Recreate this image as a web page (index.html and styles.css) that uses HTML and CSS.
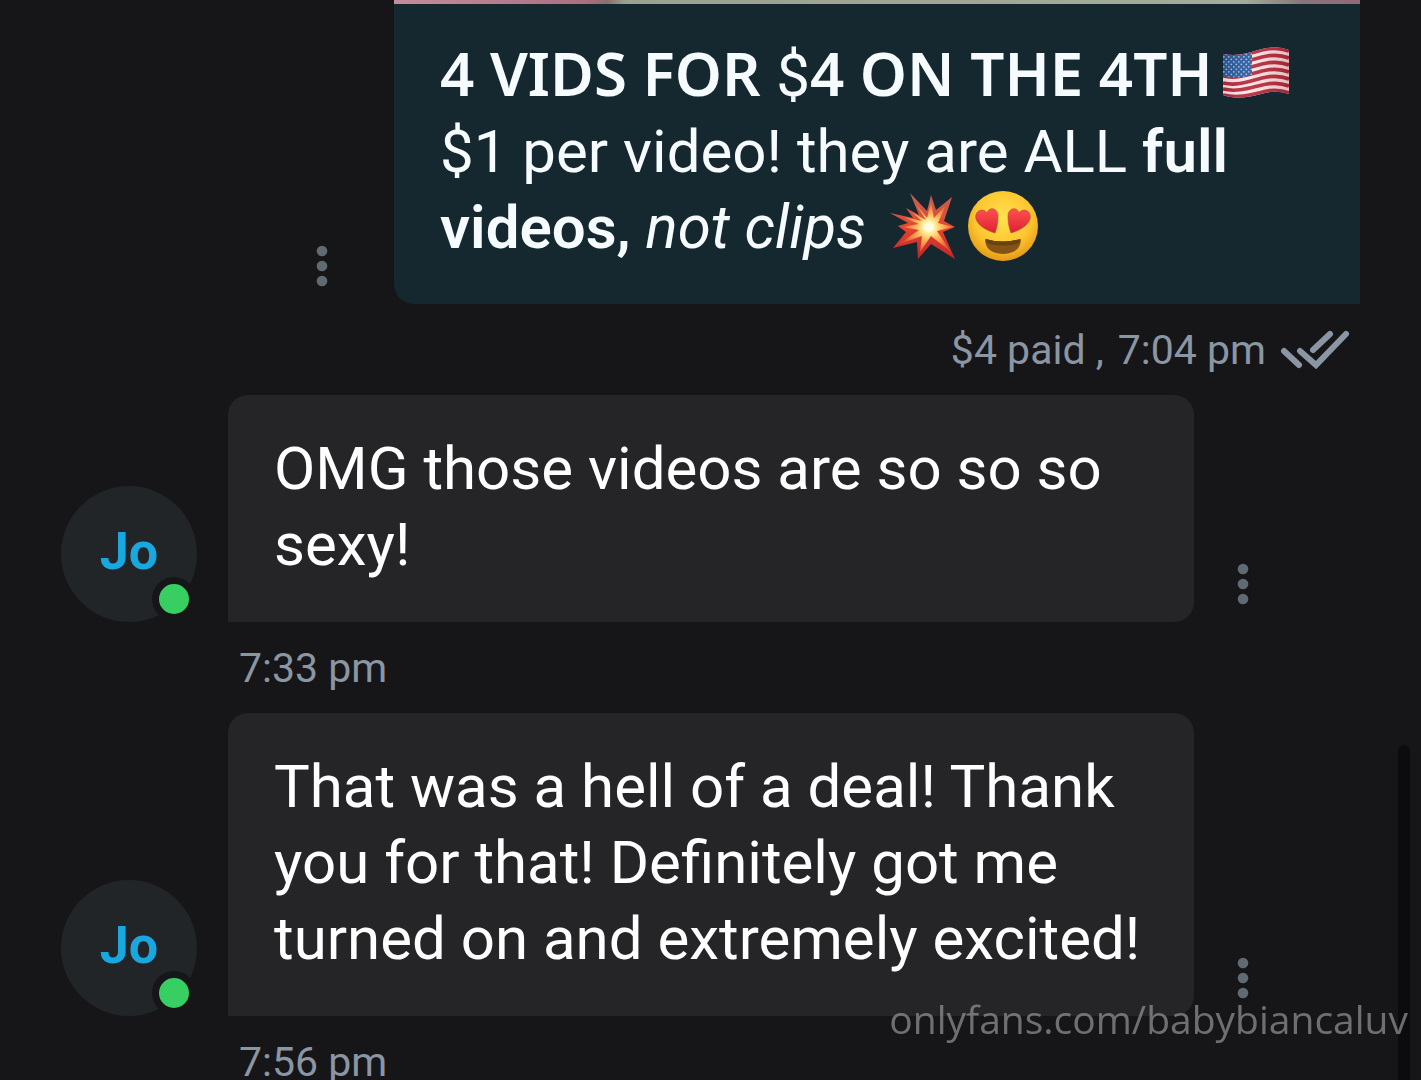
FILE: index.html
```html
<!DOCTYPE html>
<html lang="en">
<head>
    <meta charset="UTF-8">
    <meta name="viewport" content="width=device-width, initial-scale=1.0">
    <title>Messages</title>
    <link rel="stylesheet" href="styles.css">
</head>
<body>
    <main class="chat">
        <div class="message outgoing">
            <button class="menu" type="button" aria-label="Message options">
                <svg width="12" height="42" viewBox="0 0 12 42"><circle cx="6" cy="6" r="5.3"/><circle cx="6" cy="21" r="5.3"/><circle cx="6" cy="36" r="5.3"/></svg>
            </button>
            <div class="bubble">
                <div class="media"></div>
                <p class="text">
                    <strong class="headline">4 VIDS FOR <span class="currency">$</span>4 ON THE 4TH</strong><svg class="emoji" role="img" aria-label="US flag" viewBox="0 0 72 72">
                        <defs>
                            <clipPath id="flagShape"><path d="M3 16C20 20 34 12 47 10Q59 8 69 12V56Q57 52 45 55C30 59 17 62 3 57Z"/></clipPath>
                            <pattern id="stars" width="5" height="5" patternUnits="userSpaceOnUse"><rect width="5" height="5" fill="#28589c"/><circle cx="1.3" cy="1.3" r=".9" fill="#a0c0e4"/><circle cx="3.8" cy="3.8" r=".9" fill="#a0c0e4"/></pattern>
                            <linearGradient id="flagShade"><stop offset="0" stop-color="#000" stop-opacity=".12"/><stop offset=".35" stop-color="#fff" stop-opacity=".08"/><stop offset="1" stop-color="#400" stop-opacity=".2"/></linearGradient>
                        </defs>
                        <g clip-path="url(#flagShape)">
                            <rect width="72" height="72" fill="#ffe3e5"/>
                            <g fill="none" stroke="#b4283a" stroke-width="3.6">
                                <path d="M3 17C20 21 34 13 47 11Q59 9 69 13"/>
                                <path d="M3 24C20 28 34 20 47 18Q59 16 69 20"/>
                                <path d="M3 31C20 35 34 27 47 25Q59 23 69 27"/>
                                <path d="M3 38C20 42 34 34 47 32Q59 30 69 34"/>
                                <path d="M3 45C20 49 34 41 47 39Q59 37 69 41"/>
                                <path d="M3 51C20 55 34 48 47 46Q59 44 69 48"/>
                                <path d="M3 57C20 61 34 56 47 53Q59 51 69 55"/>
                            </g>
                            <path d="M3 14Q18 20 32 14V37Q18 42 3 38Z" fill="url(#stars)"/>
                            <rect width="72" height="72" fill="url(#flagShade)"/>
                        </g>
                    </svg><br>
                    $1 per video! they are ALL <strong>full videos,</strong> <em>not clips</em>
                    <svg class="emoji" role="img" aria-label="Collision" viewBox="0 0 72 72">
                        <defs>
                            <linearGradient id="blast" x1="0" y1="0" x2="0" y2="1"><stop offset="0" stop-color="#bd6356"/><stop offset=".5" stop-color="#e34632"/><stop offset="1" stop-color="#c22626"/></linearGradient>
                            <radialGradient id="spark" gradientUnits="userSpaceOnUse" cx="41" cy="37" r="28"><stop offset="0" stop-color="#fff"/><stop offset=".22" stop-color="#fff09b"/><stop offset=".5" stop-color="#ffb052"/><stop offset="1" stop-color="#e04b32"/></radialGradient>
                        </defs>
                        <path fill="url(#blast)" d="M22 3L39 21 43 5 48 20 64 7 56 31 67 37 55 42 67 69 43 54 30 69 29 52 5 58 18 42 10 36 20 33 2 23 25 28 18 18 31 25Z"/>
                        <path fill="url(#spark)" d="M25 10L39 28 43 12 46 28 58 15 50 33 65 37 49 41 63 62 43 46 32 62 34 46 11 54 31 40 14 37 31 34 9 25 34 31 22 21 38 30Z"/>
                        <circle cx="41" cy="37" r="5" fill="#fffce6"/>
                    </svg><svg class="emoji" role="img" aria-label="Heart eyes" viewBox="0 0 72 72">
                        <defs>
                            <radialGradient id="skin" cx=".5" cy=".38" r=".62"><stop offset="0" stop-color="#ffe34f"/><stop offset=".65" stop-color="#fdc52f"/><stop offset="1" stop-color="#e59a17"/></radialGradient>
                            <linearGradient id="heart" x1="0" y1="0" x2="0" y2="1"><stop offset="0" stop-color="#ff5050"/><stop offset="1" stop-color="#dd2131"/></linearGradient>
                        </defs>
                        <circle cx="36" cy="36" r="35" fill="url(#skin)"/>
                        <g fill="url(#heart)" stroke="#ba4430" stroke-width=".6">
                            <path d="M28 43C21 41 11 36 9 29C7 21 16 17 20 23C22 16 31 18 31 26C31 32 30 38 28 43Z"/>
                            <path d="M44 43C51 41 61 36 63 29C65 21 56 17 52 23C50 16 41 18 41 26C41 32 42 38 44 43Z"/>
                        </g>
                        <path d="M18 49Q36 54 54 49Q54 63 36 64Q18 63 18 49Z" fill="#855414"/>
                        <path d="M19 49Q36 54 53 49Q53 53 50 54Q36 57 22 54Q19 53 19 49Z" fill="#684211"/>
                    </svg>
                </p>
            </div>
            <div class="meta">
                <span>$4 paid ,</span>
                <time>7:04 pm</time>
                <svg class="read" role="img" aria-label="Read" viewBox="0 0 70 42"><path d="M4 22L19 36M20 22L36 36L66 5M33 21L50 5"/></svg>
            </div>
        </div>

        <div class="message incoming">
            <div class="avatar">Jo<span class="online"></span></div>
            <div class="bubble">
                <p class="text">OMG those videos are so so so sexy!</p>
            </div>
            <button class="menu" type="button" aria-label="Message options">
                <svg width="12" height="42" viewBox="0 0 12 42"><circle cx="6" cy="6" r="5.3"/><circle cx="6" cy="21" r="5.3"/><circle cx="6" cy="36" r="5.3"/></svg>
            </button>
            <div class="meta"><time>7:33 pm</time></div>
        </div>

        <div class="message incoming">
            <div class="avatar">Jo<span class="online"></span></div>
            <div class="bubble">
                <p class="text">That was a hell of a deal! Thank you for that! Definitely got me turned on and extremely excited!</p>
            </div>
            <button class="menu" type="button" aria-label="Message options">
                <svg width="12" height="42" viewBox="0 0 12 42"><circle cx="6" cy="6" r="5.3"/><circle cx="6" cy="21" r="5.3"/><circle cx="6" cy="36" r="5.3"/></svg>
            </button>
            <div class="meta"><time>7:56 pm</time></div>
        </div>
    </main>
    <div class="scroll-thumb"></div>
    <div class="watermark">onlyfans.com/babybiancaluv</div>
</body>
</html>
```
FILE: styles.css
```css
* {
    box-sizing: border-box;
}
body {
    margin: 0;
    background: #161618;
    color: #fefefe;
    font-family: Roboto, sans-serif;
}
.chat {
    height: 100vh;
    padding: 0 61px;
    overflow: hidden;
}

/* message rows */
.message {
    display: grid;
    align-items: end;
}
.outgoing {
    grid-template-columns: 98px minmax(0, 1fr);
    column-gap: 23px;
    padding-left: 212px;
}
.incoming {
    grid-template-columns: 136px minmax(0, 1fr) 98px;
    padding-right: 68px;
}
.bubble {
    overflow: hidden;
    border-radius: 20px;
    background: #252527;
}
.incoming .bubble {
    margin-left: 31px;
    border-bottom-left-radius: 0;
}
.outgoing .bubble {
    border-radius: 0 0 0 20px;
    background: #152830;
    color: #f5fbff;
}
.media {
    height: 4px;
    background: linear-gradient(90deg, #c48d9d, #a96f80 20%, #8c6d70 22%, #9da18f 24%, #a3ac9a 88%, #87757a 94%, #966877);
}
.text {
    margin: 0;
    padding: 36px 46px 39px;
    font-size: 60px;
    line-height: 76px;
}
.outgoing .text {
    padding: 34px 46px 38px;
}
.text strong {
    font-weight: 600;
}
.text .headline {
    font-family: "Noto Sans", sans-serif;
    line-height: 60px;
}
.currency {
    font-family: Roboto, sans-serif;
    font-weight: 400;
}
.emoji {
    width: 72px;
    height: 72px;
    margin-left: 7px;
    vertical-align: -14px;
}

/* options button */
.menu {
    height: 76px;
    padding: 0;
    border: 0;
    background: none;
    cursor: pointer;
}
.menu svg {
    display: block;
    margin: auto;
    fill: #5f6a72;
}

/* time and status */
.meta {
    display: flex;
    align-items: center;
    grid-column: 1 / -1;
    height: 91px;
    color: #8a96a3;
    font-size: 41px;
}
.outgoing .meta {
    justify-content: flex-end;
    gap: 14px;
    padding-right: 10px;
}
.incoming .meta {
    padding-left: 178px;
}
.read {
    width: 70px;
    height: 42px;
    fill: none;
    stroke: #8a96a3;
    stroke-width: 6;
    stroke-linecap: round;
}

/* avatar */
.avatar {
    display: flex;
    align-items: center;
    justify-content: center;
    position: relative;
    width: 136px;
    height: 136px;
    padding-bottom: 6px;
    border-radius: 50%;
    background: #222527;
    color: #18a8df;
    font-size: 52px;
    font-weight: 700;
}
.online {
    position: absolute;
    right: 1px;
    bottom: 1px;
    width: 44px;
    height: 44px;
    border: 7px solid #161618;
    border-radius: 50%;
    background: #38cf62;
}

.scroll-thumb {
    position: fixed;
    top: 69%;
    right: 11px;
    bottom: 0;
    width: 12px;
    border-radius: 6px 6px 0 0;
    background: #0c0c0e;
}
.watermark {
    position: fixed;
    right: 13px;
    bottom: 34px;
    color: rgba(150, 150, 152, 0.7);
    font-family: "Open Sans", sans-serif;
    font-size: 39px;
    line-height: 54px;
}
```
